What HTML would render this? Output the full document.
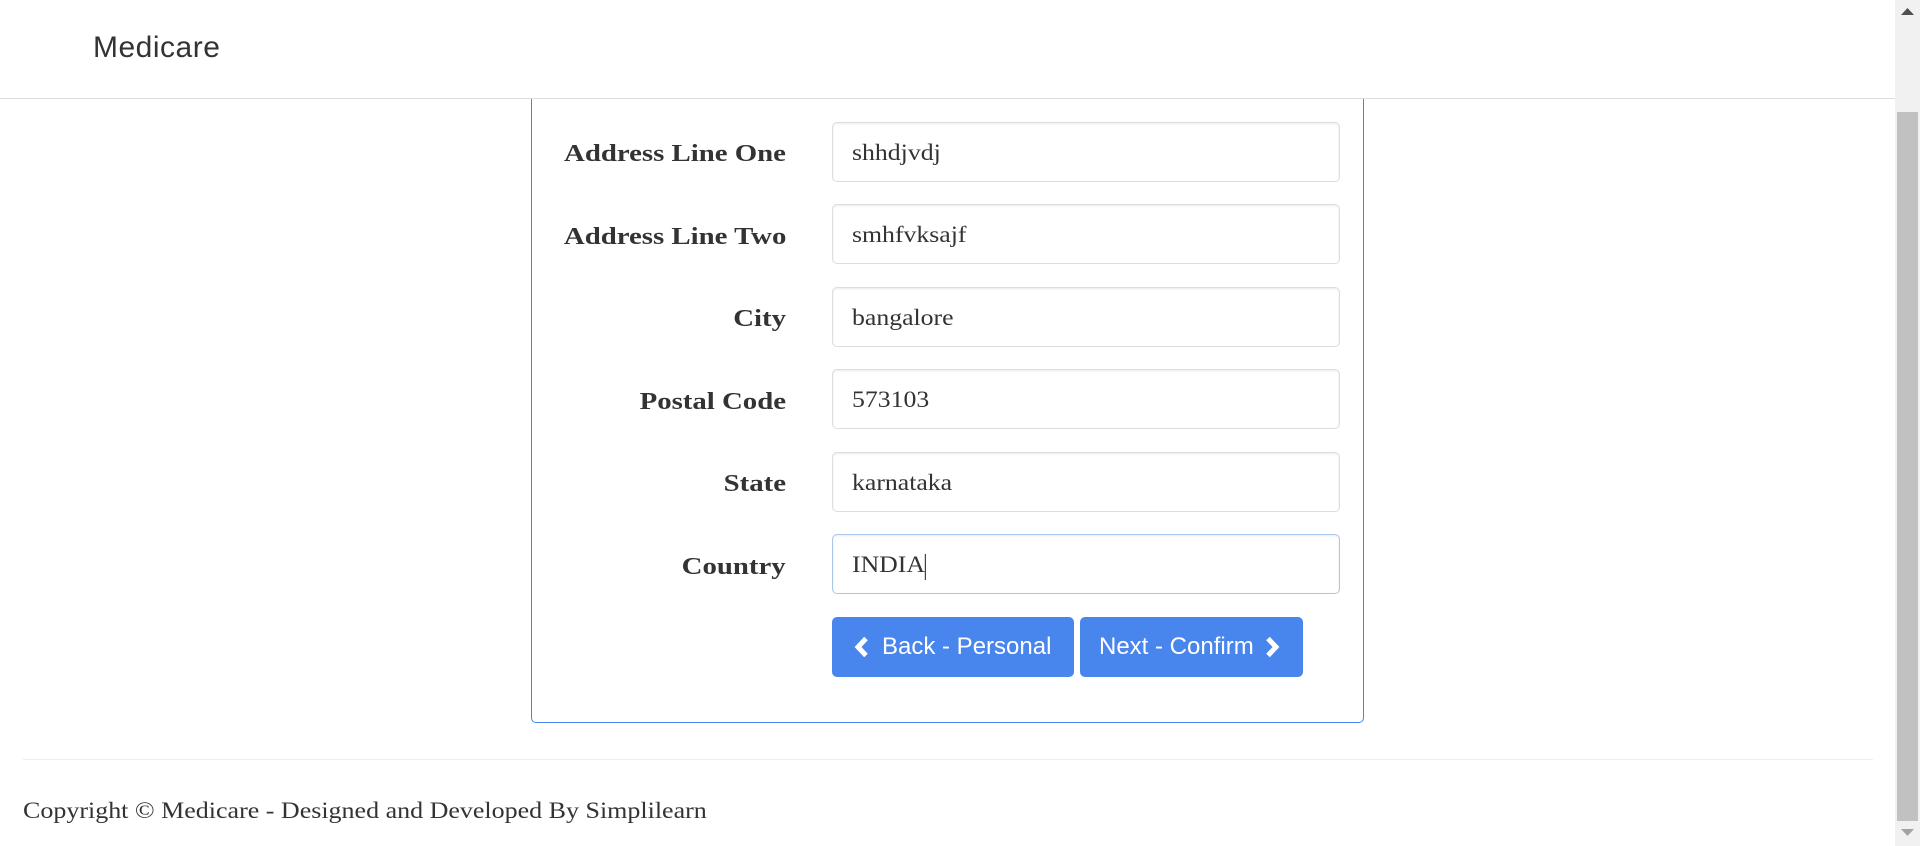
<!DOCTYPE html>
<html><head><meta charset="utf-8"><style>
*{box-sizing:border-box;margin:0;padding:0}
html,body{width:1920px;height:846px;overflow:hidden;background:#fff;font-family:"Liberation Serif",serif;color:#333}
.nav{position:absolute;left:0;top:0;width:1895px;height:99px;background:#fff;border-bottom:1px solid #ddd;z-index:2}
.brand{position:absolute;left:93px;top:31px;font:30px "Liberation Sans",sans-serif;color:#333;letter-spacing:0.5px}
.panel{position:absolute;left:531px;top:60px;width:833px;height:663px;border:1px solid #4a86e8;border-radius:5px;background:#fff}
.lbl{position:absolute;right:1134px;font-weight:bold;font-size:24px;white-space:nowrap;transform-origin:right center;transform:scaleX(1.2)}
.inp{position:absolute;left:832px;width:508px;height:60px;border:1px solid #ddd;border-radius:5px;background:#fff;box-shadow:inset 0 1px 2px rgba(0,0,0,.08);font-size:23px;padding-left:19px;line-height:60px;white-space:nowrap}
.inp span.t{display:inline-block;transform-origin:left center;transform:scaleX(1.12)}
.btn{position:absolute;top:617px;height:60px;background:#4885ed;border-radius:5px;color:#fff;font:24px "Liberation Sans",sans-serif;line-height:60px;white-space:nowrap}
.hr{position:absolute;left:23px;top:759px;width:1850px;height:1px;background:#eee}
.foot{position:absolute;left:23px;top:798px;font-size:23px;white-space:nowrap;transform-origin:left center;transform:scaleX(1.13)}
.sb{position:absolute;left:1895px;top:0;width:25px;height:846px;background:#f1f1f1}
.th{position:absolute;left:1897px;top:112px;width:21px;height:709px;background:#c1c1c1}
</style></head><body>
<div class="panel"></div>
<div class="nav"><div class="brand">Medicare</div></div>

<div class="lbl" style="top:141px">Address Line One</div>
<div class="inp" style="top:122px"><span class="t">shhdjvdj</span></div>
<div class="lbl" style="top:224px">Address Line Two</div>
<div class="inp" style="top:204px"><span class="t">smhfvksajf</span></div>
<div class="lbl" style="top:306px">City</div>
<div class="inp" style="top:287px"><span class="t">bangalore</span></div>
<div class="lbl" style="top:389px">Postal Code</div>
<div class="inp" style="top:369px"><span class="t">573103</span></div>
<div class="lbl" style="top:471px">State</div>
<div class="inp" style="top:452px"><span class="t">karnataka</span></div>
<div class="lbl" style="top:554px">Country</div>
<div class="inp" style="top:534px;border-color:#a9c7ea"><span class="t">INDIA<span style="display:inline-block;width:1px;height:26px;background:#333;vertical-align:middle"></span></span></div>

<div class="btn" style="left:832px;width:242px">
<svg style="position:absolute;left:20px;top:19px" width="18" height="22" viewBox="0 0 18 22"><path d="M14 2.5 L6 11 L14 19.5" fill="none" stroke="#fff" stroke-width="5"/></svg>
<span style="position:absolute;left:50px">Back - Personal</span></div>
<div class="btn" style="left:1080px;width:223px">
<span style="position:absolute;left:19px">Next - Confirm</span>
<svg style="position:absolute;left:184px;top:19px" width="18" height="22" viewBox="0 0 18 22"><path d="M4 2.5 L12 11 L4 19.5" fill="none" stroke="#fff" stroke-width="5"/></svg></div>

<div class="hr"></div>
<div class="foot">Copyright © Medicare - Designed and Developed By Simplilearn</div>

<div class="sb"></div>
<div class="th"></div>
<svg style="position:absolute;left:1901px;top:7px" width="13" height="8"><path d="M0 8 L6.5 1 L13 8Z" fill="#505050"/></svg>
<svg style="position:absolute;left:1901px;top:829px" width="13" height="8"><path d="M0 0 L6.5 7 L13 0Z" fill="#a3a3a3"/></svg>
</body></html>
